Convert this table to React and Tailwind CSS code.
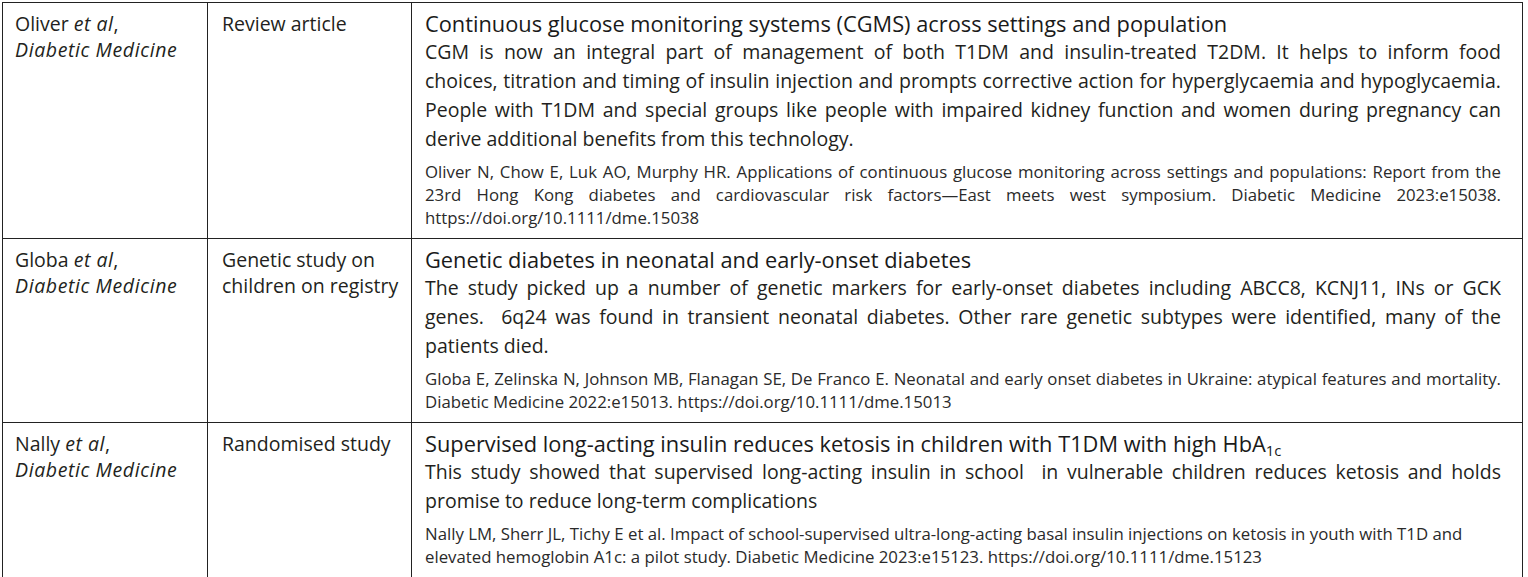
const rows = [
  {
    author: 'Oliver',
    type: ['Review article'],
    title: 'Continuous glucose monitoring systems (CGMS) across settings and population',
    body: [
      'CGM is now an integral part of management of both T1DM and insulin-treated T2DM. It helps to inform food',
      'choices, titration and timing of insulin injection and prompts corrective action for hyperglycaemia and hypoglycaemia.',
      'People with T1DM and special groups like people with impaired kidney function and women during pregnancy can',
      'derive additional benefits from this technology.',
    ],
    cite: [
      'Oliver N, Chow E, Luk AO, Murphy HR. Applications of continuous glucose monitoring across settings and populations: Report from the',
      '23rd Hong Kong diabetes and cardiovascular risk factors\u2014East meets west symposium. Diabetic Medicine 2023:e15038.',
      'https://doi.org/10.1111/dme.15038',
    ],
    citeJustify: true,
  },
  {
    author: 'Globa',
    type: ['Genetic study on', 'children on registry'],
    title: 'Genetic diabetes in neonatal and early-onset diabetes',
    body: [
      'The study picked up a number of genetic markers for early-onset diabetes including ABCC8, KCNJ11, INs or GCK',
      'genes.\u00a0 6q24 was found in transient neonatal diabetes. Other rare genetic subtypes were identified, many of the',
      'patients died.',
    ],
    cite: [
      'Globa E, Zelinska N, Johnson MB, Flanagan SE, De Franco E. Neonatal and early onset diabetes in Ukraine: atypical features and mortality.',
      'Diabetic Medicine 2022:e15013. https://doi.org/10.1111/dme.15013',
    ],
    citeJustify: true,
  },
  {
    author: 'Nally',
    type: ['Randomised study'],
    title: 'Supervised long-acting insulin reduces ketosis in children with T1DM with high HbA',
    sub: '1c',
    body: [
      'This study showed that supervised long-acting insulin in school\u00a0 in vulnerable children reduces ketosis and holds',
      'promise to reduce long-term complications',
    ],
    cite: [
      'Nally LM, Sherr JL, Tichy E et al. Impact of school-supervised ultra-long-acting basal insulin injections on ketosis in youth with T1D and',
      'elevated hemoglobin A1c: a pilot study. Diabetic Medicine 2023:e15123. https://doi.org/10.1111/dme.15123',
    ],
    citeJustify: false,
  },
];

function Lines({ lines, justify }) {
  return lines.map((line, i) => (
    <div
      key={i}
      className={justify && i < lines.length - 1 ? 'text-justify [text-align-last:justify]' : 'whitespace-nowrap'}
    >
      {line}
    </div>
  ));
}

function Row({ row, first }) {
  return (
    <div className={`grid grid-cols-[205px_204px_1111px] ${first ? '' : 'border-t border-[#222]'}`}>
      <div className="border-r border-[#222] pl-[12px] pt-[8px] text-[19.5px] leading-[26px]">
        {row.author} <i className="tracking-[0.5px]">et al</i>,
        <br />
        <i className="tracking-[0.6px]">Diabetic Medicine</i>
      </div>
      <div className="border-r border-[#222] pl-[14px] pt-[8px] text-[19.5px] leading-[26px]">
        {row.type.map((t) => (
          <div key={t}>{t}</div>
        ))}
      </div>
      <div className="border-r border-[#222] pl-[13px] pr-[21px] pt-[8px] pb-[9px]">
        <div className="text-[21.8px] leading-[26px] font-medium text-[#1a1a1a]">
          {row.title}
          {row.sub && <sub className="relative top-[4px] align-baseline text-[0.68em]">{row.sub}</sub>}
        </div>
        <div className="text-[19.5px] leading-[29px]">
          <Lines lines={row.body} justify />
        </div>
        <div className="mt-[7px] text-[16.8px] leading-[23px] text-[#2a2a2a]">
          <Lines lines={row.cite} justify={row.citeJustify} />
        </div>
      </div>
    </div>
  );
}

export default function App() {
  return (
    <div className="min-h-[577px] bg-white text-[#231f20] font-['Open_Sans',sans-serif]">
      <div className="ml-[2px] mt-[2px] w-[1521px] border-l border-t border-[#222]">
        {rows.map((row, i) => (
          <Row key={row.author} row={row} first={i === 0} />
        ))}
      </div>
    </div>
  );
}
